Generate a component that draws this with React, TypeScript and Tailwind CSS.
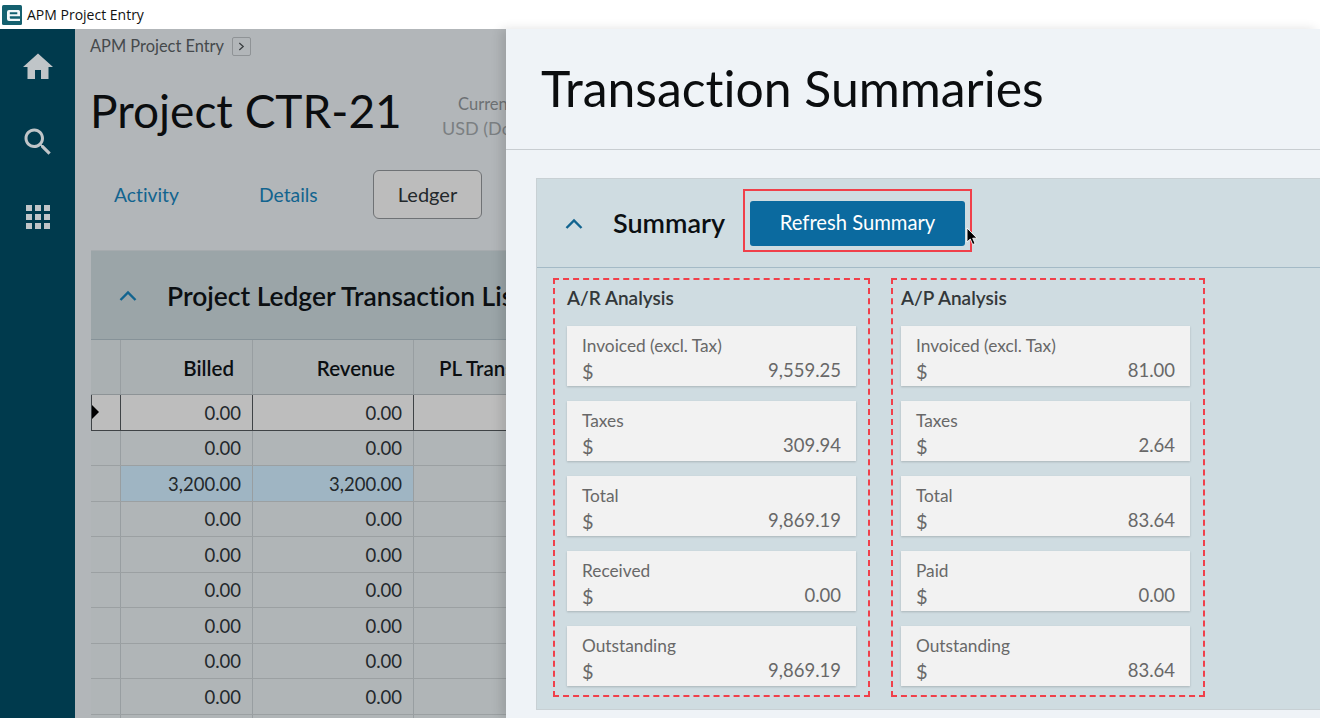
const HomeIcon = () => (
  <svg viewBox="0 0 24 24" className="w-[36px] h-[36px] fill-[#c0c5c8]"><path d="M10 20v-6h4v6h5v-8h3L12 3 2 12h3v8z" /></svg>
);
const SearchIcon = () => (
  <svg viewBox="0 0 24 24" className="w-[36px] h-[36px] fill-[#c0c5c8]"><path d="M15.5 14h-.79l-.28-.27C15.41 12.59 16 11.11 16 9.5 16 5.91 13.09 3 9.5 3S3 5.91 3 9.5 5.91 16 9.5 16c1.61 0 3.09-.59 4.23-1.57l.27.28v.79l5 4.99L20.49 19l-4.99-5zm-6 0C7.01 14 5 11.99 5 9.5S7.01 5 9.5 5 14 7.01 14 9.5 11.99 14 9.5 14z" /></svg>
);
const GridIcon = () => (
  <div className="grid grid-cols-3 gap-[3px] w-[24px]">
    {Array.from({ length: 9 }).map((_, i) => (
      <div key={i} className="w-[6px] h-[6px] bg-[#c0c5c8]" />
    ))}
  </div>
);
const Logo = () => (
  <svg viewBox="0 0 20 20" className="w-[20px] h-[20px] shrink-0">
    <rect width="20" height="20" rx="1.5" fill="#14606f" />
    <path fillRule="evenodd" d="M7 5h9.5A1.5 1.5 0 0 1 18 6.5v4.8H7.8v1.5a.9.9 0 0 0 .9.9H18V16H7a2 2 0 0 1-2-2V7a2 2 0 0 1 2-2zM7.8 7.2v2h7.5v-2z" fill="#f4f8f9" />
  </svg>
);
const Chevron = ({ cls }: { cls: string }) => (
  <svg viewBox="0 0 18 11" className="w-[18px] h-[11px] fill-none shrink-0" stroke={cls} strokeWidth="2.4"><path d="M1.5 10 9 2.5 16.5 10" /></svg>
);

const rows = ["0.00", "0.00", "3,200.00", "0.00", "0.00", "0.00", "0.00", "0.00", "0.00", "0.00"];

function Table() {
  return (
    <div className="w-[431px] text-[#23282b]">
      <div className="flex h-[55px] bg-[#aab0b2] text-[20.5px] font-semibold text-[#0b0f12] border-b border-[#8d9396]">
        <div className="w-[30px] border-r border-[#989ea1]" />
        <div className="w-[132px] border-r border-[#989ea1] flex items-center justify-end pr-[18px] pt-[2px]">Billed</div>
        <div className="w-[161px] border-r border-[#989ea1] flex items-center justify-end pr-[18px] pt-[2px]">Revenue</div>
        <div className="flex-1 flex items-center pl-[25px] pt-[2px] whitespace-nowrap overflow-hidden">PL Trans</div>
      </div>
      {rows.map((r, i) => {
        const sel = i === 0;
        const blue = i === 2;
        return (
          <div key={i} className={`flex h-[35.5px] text-[18.5px] border-b ${sel ? "bg-[#bdbdbd] border-[#3f4346]" : "bg-[#b0b5b7] border-[#9ba0a2]"}`}>
            <div className={`w-[30px] border-r flex items-center ${sel ? "border-[#3f4346] border-l" : "border-[#989ea1]"}`}>
              {sel && <div className="w-0 h-0 border-y-[7px] border-y-transparent border-l-[7px] border-l-black" />}
            </div>
            <div className={`w-[132px] border-r flex items-center justify-end pr-[11px] pt-[3px] ${sel ? "border-[#3f4346]" : "border-[#989ea1]"} ${blue ? "bg-[#9fb5c3]" : ""}`}>{r}</div>
            <div className={`w-[161px] border-r flex items-center justify-end pr-[11px] pt-[3px] ${sel ? "border-[#3f4346]" : "border-[#989ea1]"} ${blue ? "bg-[#9fb5c3]" : ""}`}>{r}</div>
            <div className="flex-1" />
          </div>
        );
      })}
    </div>
  );
}

function Card({ label, value }: { label: string; value: string }) {
  return (
    <div className="w-[289px] h-[60px] bg-[#f2f2f2] shadow-[0_1px_2px_rgba(0,0,0,0.18)] px-[15px] pt-[8px] text-[#686868] text-[17.3px] leading-[23px]">
      <div>{label}</div>
      <div className="flex justify-between items-start leading-[23px] mt-[3px]">
        <span className="text-[20px]">$</span>
        <span className="text-[18.5px] leading-[21px]">{value}</span>
      </div>
    </div>
  );
}

function Analysis({ title, items, cls }: { title: string; items: [string, string][]; cls: string }) {
  return (
    <div className={`border-2 border-dashed border-[#f0404a] h-[419px] ${cls}`}>
      <div className="text-[19px] font-semibold text-[#33383a] mt-[4px] h-[42px] leading-[27px]">{title}</div>
      <div className="flex flex-col gap-[15px]">
        {items.map(([l, v]) => (
          <Card key={l} label={l} value={v} />
        ))}
      </div>
    </div>
  );
}

export default function App() {
  return (
    <div className="w-[1320px] h-[718px] overflow-hidden flex flex-col font-['Lato',sans-serif] [font-variant-ligatures:none] bg-white">
      <div className="h-[29px] shrink-0 bg-white flex items-center pl-[2px] gap-[5px] text-[14px] text-[#111] font-['Open_Sans',sans-serif]">
        <Logo />
        <span>APM Project Entry</span>
      </div>
      <div className="flex flex-1 min-h-0">
        <div className="w-[75px] shrink-0 bg-[#003a4d] flex flex-col items-center pt-[20px]">
          <HomeIcon />
          <div className="mt-[39px]"><SearchIcon /></div>
          <div className="mt-[45px]"><GridIcon /></div>
        </div>
        <div className="w-[431px] shrink-0 bg-[#b2b6b9] overflow-hidden">
          <div className="pl-[15px] w-[700px]">
            <div className="h-[34px] flex items-center gap-[8px] text-[16.4px] text-[#45494c]">
              <span>APM Project Entry</span>
              <span className="w-[19px] h-[19px] rounded-[2px] border border-[#8f9396] flex items-center justify-center">
                <svg viewBox="0 0 8 10" className="w-[7px] h-[9px] fill-none" stroke="#3a3e41" strokeWidth="1.4"><path d="M1.5 1 6 5 1.5 9" /></svg>
              </span>
            </div>
            <div className="flex items-center h-[64px] mt-[16px]">
              <div className="text-[46px] text-[#0b0d0f] leading-none w-[352px]">Project CTR-21</div>
              <div className="flex flex-col items-center text-[#6d7174] mt-[11px]">
                <span className="text-[16.5px] leading-[23px]">Currency</span>
                <span className="text-[18px] leading-[25px] text-[#7b7f82]">USD (Dollar)</span>
              </div>
            </div>
            <div className="flex items-center h-[49px] mt-[27px] text-[19.3px] text-[#12648f]">
              <span className="ml-[24px] w-[145px] pt-[2px]">Activity</span>
              <span className="w-[114px] pt-[2px]">Details</span>
              <span className="w-[109px] h-[49px] rounded-[6px] border border-[#6f7275] bg-[#bcbcbc] text-[#23282b] text-[20px] flex items-center justify-center pb-[2px]">Ledger</span>
            </div>
          </div>
          <div className="ml-[16px] mt-[31px] w-[431px]">
            <div className="h-[90px] bg-[#9ba5a8] border-t border-[#a6abae] border-b border-b-[#869298] flex items-center pl-[28px] gap-[30px] whitespace-nowrap overflow-hidden">
              <Chevron cls="#12648f" />
              <span className="text-[26.4px] font-semibold text-[#0b0f12] pt-[3px]">Project Ledger Transaction List</span>
            </div>
            <Table />
          </div>
        </div>
        <div className="flex-1 bg-[#eff3f7] relative shadow-[-5px_0_10px_rgba(0,0,0,0.12)] flex flex-col">
          <div className="h-[121px] border-b border-[#c8cdd1] flex items-center pl-[35px] pb-[2px] text-[49.9px] text-[#0b0d0f] shrink-0">Transaction Summaries</div>
          <div className="ml-[30px] mt-[28px] h-[532px] bg-[#cfdce1] border border-[#c8d0d4] border-r-0">
            <div className="h-[89px] border-b border-[#a4bac6] flex items-center pl-[28px] relative">
              <Chevron cls="#12648f" />
              <span className="ml-[30px] text-[27px] font-semibold text-[#0b0f12] w-[130px] pt-[1px]">Summary</span>
              <div className="w-[229px] h-[63px] border-2 border-[#f0404a] flex items-start pl-[5px] pt-[10px] -mt-[6px]">
                <div className="w-[215px] h-[45px] rounded-[3px] bg-[#0b6a9f] text-white text-[20.2px] flex items-center justify-center pb-[1px]">Refresh Summary</div>
              </div>
              <svg viewBox="0 0 12 19" className="absolute left-[429px] top-[48px] w-[12px] h-[19px]">
                <path d="M1 1v14l3.3-3 2.4 5.5 2.4-1-2.4-5.3H11z" fill="#000" stroke="#fff" strokeWidth="0.9" />
              </svg>
            </div>
            <div className="flex pl-[16px] pt-[10px] gap-[21px]">
              <Analysis title="A/R Analysis" cls="w-[317px] pl-[12px]" items={[["Invoiced (excl. Tax)", "9,559.25"], ["Taxes", "309.94"], ["Total", "9,869.19"], ["Received", "0.00"], ["Outstanding", "9,869.19"]]} />
              <Analysis title="A/P Analysis" cls="w-[314px] pl-[8px]" items={[["Invoiced (excl. Tax)", "81.00"], ["Taxes", "2.64"], ["Total", "83.64"], ["Paid", "0.00"], ["Outstanding", "83.64"]]} />
            </div>
          </div>
        </div>
      </div>
    </div>
  );
}
